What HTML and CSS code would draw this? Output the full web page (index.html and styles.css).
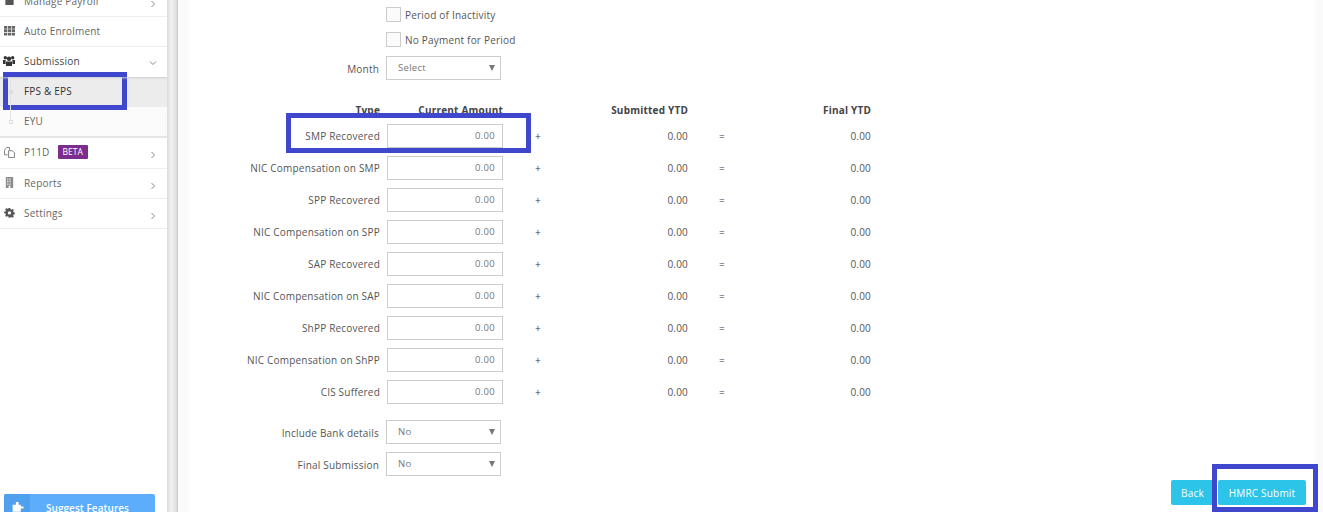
FILE: index.html
```html
<!DOCTYPE html>
<html lang="en">
<head>
<meta charset="utf-8">
<title>FPS &amp; EPS</title>
<link rel="stylesheet" href="styles.css">
</head>
<body>
<div class="app">
  <aside class="sidebar">
    <nav class="nav">
      <div class="nav-row">
        <svg class="ico" viewBox="0 0 12 12"><path fill="#555" d="M4 1h4v2h2.500v8h-9V3H4z"/></svg>
        <span class="nav-label">Manage Payroll</span>
        <svg class="chev" viewBox="0 0 6 8"><path d="M1.500 1l3 3-3 3" fill="none" stroke="#888" stroke-width="1"/></svg>
      </div>
      <div class="nav-row">
        <svg class="ico" viewBox="0 0 12 12"><path fill="#666" d="M0 1h3.500v3H0zM4.200 1h3.500v3H4.200zM8.400 1H12v3H8.400zM0 4.700h3.500v3H0zM4.200 4.700h3.500v3H4.200zM8.400 4.700H12v3H8.400zM0 8.400h3.500v3H0zM4.200 8.400h3.500v3H4.200zM8.400 8.400H12v3H8.400z"/></svg>
        <span class="nav-label">Auto Enrolment</span>
      </div>
      <div class="nav-row nav-open">
        <svg class="ico ico-wide" viewBox="0 0 12 12"><path fill="#333" d="M6 1.500a2.200 2.200 0 1 1 0 4.400 2.200 2.200 0 0 1 0-4.400zM2.300 1a1.700 1.700 0 1 1 0 3.400 1.700 1.700 0 0 1 0-3.400zM9.700 1a1.700 1.700 0 1 1 0 3.400 1.700 1.700 0 0 1 0-3.400zM0 5h2.600v4H0zM9.400 5H12v4H9.400zM3 6.500h6v4.500H3z"/></svg>
        <span class="nav-label nav-label-tight">Submission</span>
        <svg class="chev-down" viewBox="0 0 8 6"><path d="M1 1.500l3 3 3-3" fill="none" stroke="#888" stroke-width="1"/></svg>
      </div>
      <div class="subnav">
        <i class="tree-line"></i>
        <div class="sub-row sub-active"><i class="dot dot-fill"></i><span>FPS &amp; EPS</span></div>
        <div class="sub-row"><i class="dot"></i><span class="sub-muted">EYU</span></div>
      </div>
      <div class="nav-row nav-tall">
        <svg class="ico" viewBox="0 0 12 12"><path fill="none" stroke="#777" stroke-width="1" d="M.5 3.500L3 .5h3v2.500M.5 3.500v5h3.500M5 4h4l2.500 2.500v5H5z"/></svg>
        <span class="nav-label">P11D</span>
        <span class="badge">BETA</span>
        <svg class="chev" viewBox="0 0 6 8"><path d="M1.500 1l3 3-3 3" fill="none" stroke="#888" stroke-width="1"/></svg>
      </div>
      <div class="nav-row">
        <svg class="ico" viewBox="0 0 12 12"><path fill="#8a8a8a" fill-rule="evenodd" d="M2 0h8v12H2zM3.500 1.500v1.500h1.300V1.500zM6 1.500v1.500h1.300V1.500zM3.500 4.200v1.500h1.300V4.200zM6 4.200v1.500h1.300V4.200zM3.500 7v1.500h1.300V7zM6 7v1.500h1.300V7zM5 9.500V12h2V9.500z"/></svg>
        <span class="nav-label">Reports</span>
        <svg class="chev" viewBox="0 0 6 8"><path d="M1.500 1l3 3-3 3" fill="none" stroke="#888" stroke-width="1"/></svg>
      </div>
      <div class="nav-row">
        <svg class="ico" viewBox="0 0 12 12"><path fill="#555" fill-rule="evenodd" d="M5 .5h2l.3 1.600 1.200.5L9.900 1.700l1.400 1.400-.9 1.400.5 1.200 1.600.3v2l-1.600.3-.5 1.200.9 1.400-1.400 1.400-1.400-.9-1.200.5L7 12.500H5l-.3-1.600-1.200-.5-1.400.9L.7 9.900l.9-1.400-.5-1.200L-.5 7V5l1.600-.3.5-1.200-.9-1.400L2.100.7l1.400.9 1.200-.5zM6 4.500a2 2 0 1 0 0 4 2 2 0 0 0 0-4z" transform="translate(.6 .6) scale(.9)"/></svg>
        <span class="nav-label">Settings</span>
        <svg class="chev" viewBox="0 0 6 8"><path d="M1.500 1l3 3-3 3" fill="none" stroke="#888" stroke-width="1"/></svg>
      </div>
    </nav>
    <div class="suggest">
      <span class="suggest-icon">
        <svg class="puzzle" viewBox="0 0 12 12"><path fill="#fff" d="M4.500 1h2.500v2.500h2v1.500h2.500v2h-2.500v3H1.500V3.500h3z"/></svg>
      </span>
      <span class="suggest-text">Suggest Features</span>
    </div>
  </aside>
  <div class="gutter"></div>
  <main class="main">
    <div class="form">
      <div class="check-row"><i class="checkbox"></i><span>Period of Inactivity</span></div>
      <div class="check-row"><i class="checkbox"></i><span>No Payment for Period</span></div>
      <div class="select-row select-month">
        <label class="sel-label">Month</label>
        <div class="select"><span>Select</span><i class="caret"></i></div>
      </div>
      <div class="grid head">
        <span class="c-label">Type</span>
        <span class="c-current">Current Amount</span>
        <span class="c-plus"></span>
        <span class="c-num">Submitted YTD</span>
        <span class="c-eq"></span>
        <span class="c-num">Final YTD</span>
      </div>
      <div class="grid row"><span class="c-label">SMP Recovered</span><span class="input">0.00</span><span class="c-plus">+</span><span class="c-num">0.00</span><span class="c-eq">=</span><span class="c-num">0.00</span></div>
      <div class="grid row"><span class="c-label">NIC Compensation on SMP</span><span class="input">0.00</span><span class="c-plus">+</span><span class="c-num">0.00</span><span class="c-eq">=</span><span class="c-num">0.00</span></div>
      <div class="grid row"><span class="c-label">SPP Recovered</span><span class="input">0.00</span><span class="c-plus">+</span><span class="c-num">0.00</span><span class="c-eq">=</span><span class="c-num">0.00</span></div>
      <div class="grid row"><span class="c-label">NIC Compensation on SPP</span><span class="input">0.00</span><span class="c-plus">+</span><span class="c-num">0.00</span><span class="c-eq">=</span><span class="c-num">0.00</span></div>
      <div class="grid row"><span class="c-label">SAP Recovered</span><span class="input">0.00</span><span class="c-plus">+</span><span class="c-num">0.00</span><span class="c-eq">=</span><span class="c-num">0.00</span></div>
      <div class="grid row"><span class="c-label">NIC Compensation on SAP</span><span class="input">0.00</span><span class="c-plus">+</span><span class="c-num">0.00</span><span class="c-eq">=</span><span class="c-num">0.00</span></div>
      <div class="grid row"><span class="c-label">ShPP Recovered</span><span class="input">0.00</span><span class="c-plus">+</span><span class="c-num">0.00</span><span class="c-eq">=</span><span class="c-num">0.00</span></div>
      <div class="grid row"><span class="c-label">NIC Compensation on ShPP</span><span class="input">0.00</span><span class="c-plus">+</span><span class="c-num">0.00</span><span class="c-eq">=</span><span class="c-num">0.00</span></div>
      <div class="grid row"><span class="c-label">CIS Suffered</span><span class="input">0.00</span><span class="c-plus">+</span><span class="c-num">0.00</span><span class="c-eq">=</span><span class="c-num">0.00</span></div>
      <div class="select-row select-bank">
        <label class="sel-label">Include Bank details</label>
        <div class="select"><span>No</span><i class="caret"></i></div>
      </div>
      <div class="select-row select-final">
        <label class="sel-label">Final Submission</label>
        <div class="select"><span>No</span><i class="caret"></i></div>
      </div>
    </div>
    <div class="actions">
      <button class="btn btn-back">Back</button>
      <button class="btn btn-submit">HMRC Submit</button>
    </div>
  </main>
</div>
<div class="mark mark-fps"></div>
<div class="mark mark-smp"></div>
<div class="mark mark-submit"></div>
</body>
</html>
```
FILE: styles.css
```css
* { box-sizing: border-box; }
html, body { margin: 0; padding: 0; height: 512px; overflow: hidden; background: #fff; }
body { font-family: "Open Sans", sans-serif; font-size: 10px; letter-spacing: 0.2px; color: #555; position: relative; }
.app { display: flex; height: 512px; width: 1323px; }

.sidebar { width: 167px; height: 512px; flex: none; display: flex; flex-direction: column; justify-content: space-between; overflow: hidden; background: #fff; }
.nav { margin-top: -13px; }
.nav-row { height: 30px; display: flex; align-items: center; padding: 0 0 2px 4px; border-bottom: 1px solid #eee; color: #666; position: relative; }
.nav-open { color: #444; border-bottom: 0; padding-bottom: 3px; box-shadow: 0 1px 2px #ccc; z-index: 1; }
.nav-tall { height: 31px; }
.ico { width: 11px; height: 11px; flex: none; }
.ico-wide { width: 12px; height: 12px; margin-left: -1px; }
.nav-label { margin-left: 9px; }
.nav-label-tight { margin-left: 9px; }
.chev { width: 6px; height: 8px; position: absolute; left: 150px; top: 13px; }
.chev-down { width: 8px; height: 6px; position: absolute; left: 149px; top: 13px; }
.badge { margin-left: 8px; background: #7b2d8e; color: #fff; font-size: 8.5px; letter-spacing: 0; line-height: 14px; height: 14px; padding: 0 5px; border-radius: 1px; }

.subnav { background: #fbfbfb; border-bottom: 2px solid #e6e6e6; height: 61px; position: relative; }
.tree-line { position: absolute; left: 10px; top: 0; width: 1px; height: 47px; background: #e2e2e2; z-index: 1; }
.sub-row { height: 30px; display: flex; align-items: center; padding: 0 0 3px 24px; position: relative; color: #333; }
.sub-active { background: #ececec; }
.sub-muted { color: #666; }
.dot { position: absolute; left: 9px; top: 13px; width: 4px; height: 4px; border: 1px solid #ddd; background: #fff; z-index: 2; }
.dot-fill { background: #ddd; }

.suggest { margin: 0 0 -12px 4px; width: 151px; height: 30px; background: #5caefc; border-radius: 2px; display: flex; color: #fff; }
.suggest-icon { width: 26px; background: #4fa1ed; display: flex; justify-content: center; padding-top: 7px; border-radius: 2px 0 0 2px; }
.puzzle { width: 13px; height: 13px; }
.suggest-text { flex: 1; text-align: center; padding: 7px 10px 0 0; font-size: 10px; letter-spacing: 0.05px; font-weight: 600; line-height: 14px; }

.gutter { width: 11px; flex: none; background: linear-gradient(to right, #dcdcdc, #f0f0f0 40%, #e2e2e2 80%, #c9c9c9); }

.main { flex: 1; position: relative; background: linear-gradient(to right, #fafafa 0, #fafafa 11px, #fff 11px, #fff 1137px, #fafafa 1137px); }
.form { padding-top: 2px; }
.check-row { height: 25px; display: flex; align-items: center; padding-left: 208px; color: #555; }
.check-row span { margin-left: 4px; }
.checkbox { width: 15px; height: 15px; border: 1px solid #ccc; background: #fbfbfb; flex: none; }

.select-row { display: flex; align-items: center; height: 24px; }
.sel-label { width: 201px; text-align: right; color: #555; padding-top: 2px; }
.select { margin-left: 7px; width: 115px; height: 24px; border: 1px solid #ccc; background: #fff; position: relative; padding: 0 0 0 11px; line-height: 22px; color: #777; font-size: 9.5px; letter-spacing: 0.3px; }
.caret { position: absolute; right: 5px; top: 8px; width: 0; height: 0; border-left: 3px solid transparent; border-right: 3px solid transparent; border-top: 6px solid #777; }
.select-month { margin-top: 4px; }
.select-bank { margin-top: 16px; }
.select-final { margin-top: 8px; }

.grid { display: grid; grid-template-columns: 202px 123px 34px 151px 66px 117px; align-items: center; }
.head { margin-top: 15px; height: 29px; font-weight: 700; color: #444; }
.head .c-current { text-align: right; }
.row { height: 24px; margin-bottom: 8px; }
.row:last-of-type { margin-bottom: 0; }
.c-label { text-align: right; }
.input { margin-left: 7px; width: 116px; height: 24px; border: 1px solid #ccc; text-align: right; padding-right: 7px; line-height: 22px; color: #777; font-size: 9.5px; letter-spacing: 0.3px; }
.c-plus { padding-left: 32px; color: #335; }
.c-num { text-align: right; }
.c-eq { text-align: center; padding-left: 2px; color: #335; }

.actions { position: absolute; right: 17px; bottom: 7px; display: flex; gap: 4px; }
.btn { font-family: "Open Sans", sans-serif; font-size: 10px; letter-spacing: 0.2px; font-weight: 500; height: 25px; border: 0; border-radius: 2px; background: #2cc4e8; color: #fff; padding: 0; }
.btn-back { width: 43px; }
.btn-submit { width: 88px; }

.mark { position: absolute; border: 5px solid #3f48cc; background: transparent; }
.mark-fps { left: 3px; top: 72px; width: 124px; height: 38px; }
.mark-smp { left: 286px; top: 113px; width: 245px; height: 40px; }
.mark-submit { left: 1212px; top: 464px; width: 106px; height: 48px; }
```
